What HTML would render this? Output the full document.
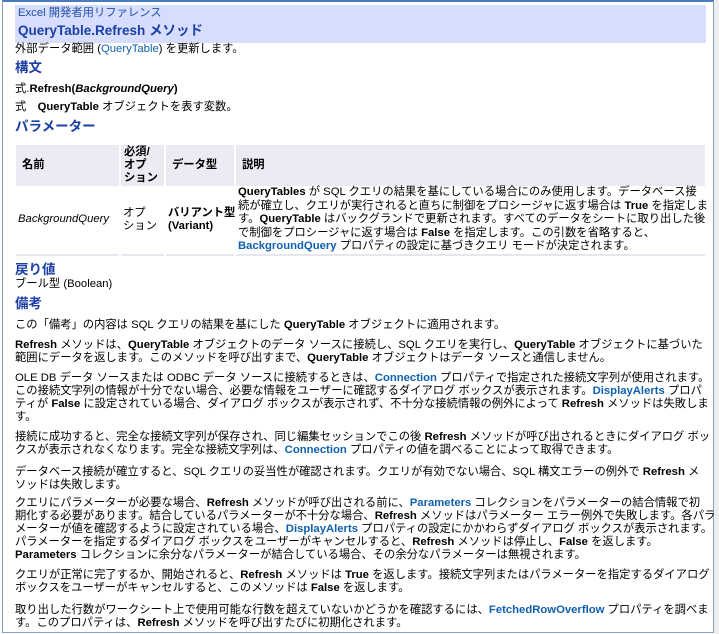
<!DOCTYPE html>
<html><head><meta charset="utf-8"><style>
*{margin:0;padding:0;box-sizing:border-box}
body{width:719px;height:634px;overflow:hidden;background:#fff;font-family:"Liberation Sans","Noto Sans CJK JP",sans-serif;font-size:11.3px;color:#000;position:relative}
.frame{position:absolute;left:2px;top:0;width:712px;height:633px;border:1px solid #8aa0c0;border-top:2px solid #4a7ac0}
.sb{position:absolute;left:714px;top:0;width:5px;height:634px;background:#eee}
.a{position:absolute;left:15px;white-space:nowrap;line-height:13px}
.h{color:#1b3fa6;font-weight:bold;font-size:13.5px;line-height:15px}
.l{color:#1060b0}
b{font-weight:bold}
.hdr{position:absolute;left:15px;top:5px;width:691px;height:38px;background:#d6ddff}
.th{position:absolute;top:145px;height:41px;background:#ebebf3;font-weight:bold;line-height:13px;display:flex;align-items:center;padding-left:6px}
.td{position:absolute;top:186px;height:70px;border-bottom:2px solid #e6e6ee;line-height:13.5px;display:flex;align-items:center;padding-left:2px;white-space:nowrap}
</style></head><body>
<div class="frame"></div><div class="sb"></div>
<div class="hdr"></div>
<div class="a" style="top:7px;left:18px;color:#1f4fa8">Excel 開発者用リファレンス</div>
<div class="a h" style="top:23px;left:18px">QueryTable.Refresh メソッド</div>
<div class="a" style="top:43px">外部データ範囲 (<span class="l">QueryTable</span>) を更新します。</div>
<div class="a h" style="top:60px">構文</div>
<div class="a" style="top:83px">式.<b>Refresh(<i>BackgroundQuery</i>)</b></div>
<div class="a" style="top:101px">式　<b>QueryTable</b> オブジェクトを表す変数。</div>
<div class="a h" style="top:119px">パラメーター</div>
<div class="th" style="left:16px;width:103px">名前</div>
<div class="th" style="left:121px;width:43px;padding-left:3px">必須/<br>オプ<br>ション</div>
<div class="th" style="left:166px;width:68px">データ型</div>
<div class="th" style="left:236px;width:469px">説明</div>
<div class="td" style="left:16px;width:103px;font-style:italic">BackgroundQuery</div>
<div class="td" style="left:121px;width:43px">オプ<br>ション</div>
<div class="td" style="left:166px;width:68px;font-weight:bold">バリアント型<br>(Variant)</div>
<div class="td" style="left:236px;width:469px"><div><b>QueryTables</b> が SQL クエリの結果を基にしている場合にのみ使用します。データベース接<br>続が確立し、クエリが実行されると直ちに制御をプロシージャに返す場合は <b>True</b> を指定しま<br>す。<b>QueryTable</b> はバックグランドで更新されます。すべてのデータをシートに取り出した後<br>で制御をプロシージャに返す場合は <b>False</b> を指定します。この引数を省略すると、<br><b class="l">BackgroundQuery</b> プロパティの設定に基づきクエリ モードが決定されます。</div></div>
<div class="a h" style="top:262px">戻り値</div>
<div class="a" style="top:278px">ブール型 (Boolean)</div>
<div class="a h" style="top:296px">備考</div>
<div class="a" style="top:319px">この「備考」の内容は SQL クエリの結果を基にした <b>QueryTable</b> オブジェクトに適用されます。</div>
<div class="a" style="top:339px"><b>Refresh</b> メソッドは、<b>QueryTable</b> オブジェクトのデータ ソースに接続し、SQL クエリを実行し、<b>QueryTable</b> オブジェクトに基づいた<br>範囲にデータを返します。このメソッドを呼び出すまで、<b>QueryTable</b> オブジェクトはデータ ソースと通信しません。</div>
<div class="a" style="top:372px">OLE DB データ ソースまたは ODBC データ ソースに接続するときは、<b class="l">Connection</b> プロパティで指定された接続文字列が使用されます。<br>この接続文字列の情報が十分でない場合、必要な情報をユーザーに確認するダイアログ ボックスが表示されます。<b class="l">DisplayAlerts</b> プロパ<br>ティが <b>False</b> に設定されている場合、ダイアログ ボックスが表示されず、不十分な接続情報の例外によって <b>Refresh</b> メソッドは失敗しま<br>す。</div>
<div class="a" style="top:431px">接続に成功すると、完全な接続文字列が保存され、同じ編集セッションでこの後 <b>Refresh</b> メソッドが呼び出されるときにダイアログ ボッ<br>クスが表示されなくなります。完全な接続文字列は、<b class="l">Connection</b> プロパティの値を調べることによって取得できます。</div>
<div class="a" style="top:466px">データベース接続が確立すると、SQL クエリの妥当性が確認されます。クエリが有効でない場合、SQL 構文エラーの例外で <b>Refresh</b> メ<br>ソッドは失敗します。</div>
<div class="a" style="top:497px">クエリにパラメーターが必要な場合、<b>Refresh</b> メソッドが呼び出される前に、<b class="l">Parameters</b> コレクションをパラメーターの結合情報で初<br>期化する必要があります。結合しているパラメーターが不十分な場合、<b>Refresh</b> メソッドはパラメーター エラー例外で失敗します。各パラ<br>メーターが値を確認するように設定されている場合、<b class="l">DisplayAlerts</b> プロパティの設定にかかわらずダイアログ ボックスが表示されます。<br>パラメーターを指定するダイアログ ボックスをユーザーがキャンセルすると、<b>Refresh</b> メソッドは停止し、<b>False</b> を返します。<br><b>Parameters</b> コレクションに余分なパラメーターが結合している場合、その余分なパラメーターは無視されます。</div>
<div class="a" style="top:569px">クエリが正常に完了するか、開始されると、<b>Refresh</b> メソッドは <b>True</b> を返します。接続文字列またはパラメーターを指定するダイアログ<br>ボックスをユーザーがキャンセルすると、このメソッドは <b>False</b> を返します。</div>
<div class="a" style="top:604px">取り出した行数がワークシート上で使用可能な行数を超えていないかどうかを確認するには、<b class="l">FetchedRowOverflow</b> プロパティを調べま<br>す。このプロパティは、<b>Refresh</b> メソッドを呼び出すたびに初期化されます。</div>
</body></html>
